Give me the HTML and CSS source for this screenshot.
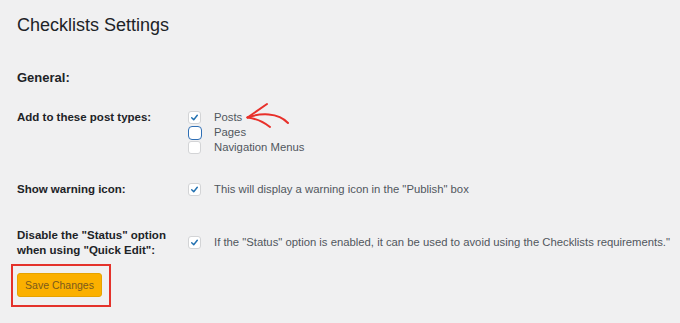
FILE: index.html
```html
<!DOCTYPE html>
<html lang="en">
<head>
<meta charset="utf-8">
<title>Checklists Settings</title>
<link rel="stylesheet" href="styles.css">
</head>
<body>
<div class="wrap">
  <h1 class="title">Checklists Settings</h1>
  <h2 class="section">General:</h2>
  <div class="form">
    <div class="row">
      <div class="label">Add to these post types:</div>
      <div class="field field-types">
        <label class="opt"><span class="cb"><svg viewBox="0 0 13 13"><path d="M3.2 6.8 L5.6 9.2 L9.8 3.8"/></svg></span><span>Posts</span></label>
        <label class="opt"><span class="cb cb-focus"></span><span>Pages</span></label>
        <label class="opt"><span class="cb"></span><span>Navigation Menus</span></label>
        <svg class="arrow" viewBox="0 0 48 28" width="48" height="28">
          <path d="M2.5 15.5 C15 11 33 10 43 21"/>
          <path d="M2.5 15.5 L22 2"/>
          <path d="M2.5 15.5 Q15 17 25 25"/>
        </svg>
      </div>
    </div>
    <div class="row">
      <div class="label">Show warning icon:</div>
      <div class="field">
        <label class="opt"><span class="cb"><svg viewBox="0 0 13 13"><path d="M3.2 6.8 L5.6 9.2 L9.8 3.8"/></svg></span><span>This will display a warning icon in the "Publish" box</span></label>
      </div>
    </div>
    <div class="row row-quick">
      <div class="label">Disable the "Status" option<br>when using "Quick Edit":</div>
      <div class="field">
        <label class="opt"><span class="cb"><svg viewBox="0 0 13 13"><path d="M3.2 6.8 L5.6 9.2 L9.8 3.8"/></svg></span><span>If the "Status" option is enabled, it can be used to avoid using the Checklists requirements."</span></label>
      </div>
    </div>
  </div>
  <div class="highlight"><button class="btn" type="button">Save Changes</button></div>
</div>
</body>
</html>
```

FILE: styles.css
```css
html, body {
  margin: 0;
  padding: 0;
  background: #f0f0f1;
}
body {
  font-family: "Liberation Sans", Arial, sans-serif;
  color: #1d2327;
  overflow: hidden;
}
.wrap {
  padding: 13px 0 0 17px;
}
.title {
  margin: 0;
  font-size: 18px;
  line-height: 24px;
  font-weight: 400;
  color: #1d2327;
}
.section {
  margin: 32.5px 0 0;
  font-size: 13px;
  line-height: 16px;
  font-weight: 700;
  color: #1d2327;
}
.form {
  margin-top: 24.5px;
  display: flex;
  flex-direction: column;
  gap: 27px;
}
.row {
  display: flex;
  align-items: flex-start;
}
.row-quick {
  margin-top: 4px;
  align-items: center;
}
.label {
  width: 171px;
  flex: none;
  font-size: 11.5px;
  line-height: 15px;
  font-weight: 700;
  color: #1d2327;
}
.row-quick .label {
  line-height: 14.5px;
}
.field {
  display: flex;
  flex-direction: column;
}
.field-types {
  position: relative;
}
.opt {
  display: flex;
  align-items: center;
  height: 15px;
  font-size: 11.3px;
  line-height: 15px;
  color: #50575e;
  white-space: nowrap;
}
.cb {
  box-sizing: border-box;
  width: 13px;
  height: 13px;
  margin-right: 13px;
  background: #fff;
  border: 1px solid #d3d4d6;
  border-radius: 3px;
  display: flex;
  align-items: center;
  justify-content: center;
  flex: none;
}
.cb svg {
  width: 13px;
  height: 13px;
  fill: none;
  stroke: #2271b1;
  stroke-width: 1.7;
  stroke-linecap: round;
  stroke-linejoin: round;
}
.cb-focus {
  border: 1.5px solid #2f6fb5;
  border-radius: 4px;
  width: 14px;
  height: 14px;
  margin-left: -0.5px;
  margin-right: 12.5px;
}
.arrow {
  position: absolute;
  left: 57px;
  top: -8px;
  fill: none;
  stroke: #e8302a;
  stroke-width: 2;
  stroke-linecap: round;
  stroke-linejoin: round;
}
.highlight {
  width: fit-content;
  margin: 7.4px 0 0 -6px;
  padding: 7px 7px 8px 4px;
  border: 2px solid #e4322b;
}
.btn {
  display: block;
  box-sizing: border-box;
  height: 24px;
  width: 85px;
  padding: 0;
  margin: 0;
  font-family: "Liberation Sans", Arial, sans-serif;
  font-size: 10.5px;
  line-height: 22px;
  color: #7a5a1c;
  background: #fbb000;
  border: 1px solid #e6a300;
  border-radius: 3px;
}
```
